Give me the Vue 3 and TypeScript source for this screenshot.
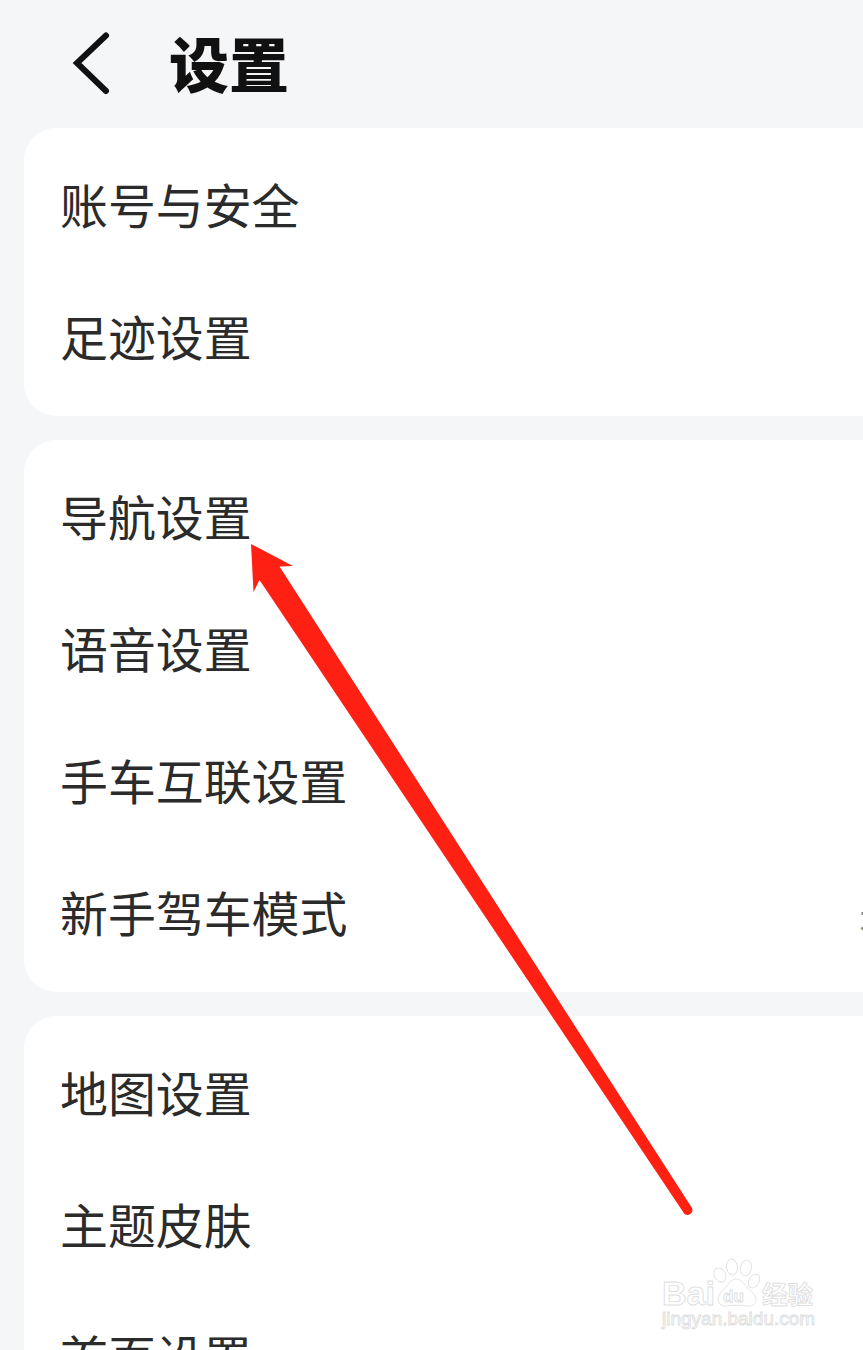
<script setup lang="ts">
interface Row { label: string; value?: string }
const groups: Row[][] = [
  [{ label: '账号与安全' }, { label: '足迹设置' }],
  [{ label: '导航设置' }, { label: '语音设置' }, { label: '手车互联设置' }, { label: '新手驾车模式', value: '未开启' }],
  [{ label: '地图设置' }, { label: '主题皮肤' }, { label: '首页设置' }],
]
</script>

<template>
  <div class="page">
    <header class="header">
      <svg class="back" width="44" height="70" viewBox="0 0 44 70">
        <path d="M36 6.5 L7 34 L36 62" fill="none" stroke="#111" stroke-width="6" stroke-linecap="round" stroke-linejoin="miter" />
      </svg>
      <h1 class="title">设置</h1>
    </header>
    <main class="groups">
      <section v-for="(group, i) in groups" :key="i" class="card">
        <div v-for="row in group" :key="row.label" class="row">
          <span class="label">{{ row.label }}</span>
          <span v-if="row.value" class="value">{{ row.value }}</span>
        </div>
      </section>
    </main>

    <svg class="overlay" width="863" height="1350" viewBox="0 0 863 1350">
      <path d="M251 544 L293 566 L279.5 566.5 L692 1208 A5 5 0 0 1 684.5 1214 L259.5 580 L253.5 592 Z" fill="#ff2014" />
      <g class="mark">
        <ellipse cx="720" cy="1275" rx="5.5" ry="7.5" transform="rotate(-30 720 1275)" />
        <ellipse cx="732" cy="1267" rx="5.5" ry="8" transform="rotate(-8 732 1267)" />
        <ellipse cx="746" cy="1268" rx="5.5" ry="8" transform="rotate(12 746 1268)" />
        <ellipse cx="754" cy="1281" rx="5" ry="7.5" transform="rotate(30 754 1281)" />
        <path d="M736 1279 C743 1279 746 1288 752 1292 C759 1298 756 1307 748 1306 C742 1305 732 1305 726 1306 C718 1307 716 1298 721 1292 C727 1288 730 1279 736 1279 Z" />
        <text x="662" y="1305" class="bai">Bai</text>
        <text x="723" y="1302" class="du">du</text>
        <text x="762" y="1304" class="jy">经验</text>
        <text x="662" y="1325" class="url">jingyan.baidu.com</text>
      </g>
    </svg>
  </div>
</template>

<style>
html, body { margin: 0; background: #f5f6f8; }
</style>

<style scoped>
.page {
  position: relative;
  width: 863px;
  height: 1350px;
  overflow: hidden;
  background: #f5f6f8;
  font-family: "Noto Sans CJK SC", "Noto Sans", sans-serif;
}
.header {
  height: 128px;
  display: flex;
  align-items: center;
  padding-left: 70px;
  box-sizing: border-box;
}
.back {
  flex: none;
  margin-top: -1px;
}
.title {
  margin: 0 0 4px 55px;
  font-size: 60px;
  line-height: 1;
  font-weight: 900;
  color: #111;
}
.groups {
  display: flex;
  flex-direction: column;
  gap: 24px;
  margin-left: 24px;
  width: 1000px;
}
.card {
  background: #fff;
  border-radius: 32px;
  padding: 12px 0;
}
.row {
  height: 132px;
  box-sizing: border-box;
  padding: 0 0 5px 36px;
  display: grid;
  grid-template-columns: 799px auto;
  align-items: center;
}
.label {
  font-size: 47.9px;
  line-height: 1;
  color: #2b2b2b;
  white-space: nowrap;
}
.value {
  font-size: 40px;
  color: #8a8a8a;
  white-space: nowrap;
}
.overlay {
  position: absolute;
  left: 0;
  top: 0;
  pointer-events: none;
}
.mark ellipse,
.mark path {
  fill: #fff;
  stroke: #e4e4e4;
  stroke-width: 1;
}
.mark text {
  fill: #fff;
  stroke: #dedede;
  stroke-width: 0.9;
}
.bai {
  font-family: "Liberation Sans", sans-serif;
  font-size: 34px;
  font-weight: 700;
}
.du {
  font-family: "Liberation Sans", sans-serif;
  font-size: 17px;
  font-weight: 700;
}
.jy {
  font-family: "Noto Sans CJK SC", sans-serif;
  font-size: 25.5px;
  font-weight: 700;
}
.url {
  font-family: "Liberation Sans", sans-serif;
  font-size: 19px;
}
</style>
